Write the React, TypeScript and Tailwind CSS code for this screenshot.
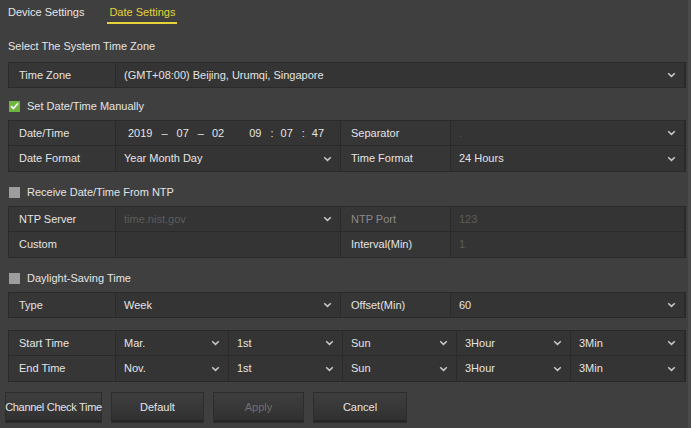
import { ReactNode } from 'react';

interface CellProps {
  children?: ReactNode;
  className?: string;
  caret?: boolean;
  dim?: boolean;
}

function Caret() {
  return (
    <svg width="9" height="6" viewBox="0 0 9 6" className="shrink-0">
      <path d="M1.2 1.2 L4.5 4.4 L7.8 1.2" fill="none" stroke="#c8c8c8" strokeWidth="1.5" />
    </svg>
  );
}

function Label({ children, className = '' }: CellProps) {
  return (
    <div className={`h-full flex items-center pl-[10px] bg-[#363636] border-r border-[#2a2a2a] ${className}`}>
      {children}
    </div>
  );
}

function Value({ children, className = '', caret, dim }: CellProps) {
  return (
    <div
      className={`h-full flex items-center justify-between pl-[8px] pr-[8px] bg-[#343434] border-r border-[#2a2a2a] ${
        dim ? 'text-[#5c5c5c]' : 'text-[#e4e4e4]'
      } ${className}`}
    >
      <span className="whitespace-nowrap">{children}</span>
      {caret && <Caret />}
    </div>
  );
}

function Row({ children, last, h = 'h-[25px]' }: { children: ReactNode; last?: boolean; h?: string }) {
  return <div className={`${h} flex ${last ? '' : 'border-b border-[#2a2a2a]'}`}>{children}</div>;
}

function Table({ children, className = '' }: { children: ReactNode; className?: string }) {
  return (
    <div className={`border border-[#2a2a2a] shadow-[inset_0_1px_0_#3a3a3a] ${className}`}>{children}</div>
  );
}

function CheckLabel({ checked, children }: { checked?: boolean; children: ReactNode }) {
  return (
    <div className="h-[20px] flex items-center gap-[7px] pl-[1px]">
      {checked ? (
        <div className="w-[11px] h-[11px] bg-[#6fb43f] flex items-center justify-center">
          <svg width="9" height="8" viewBox="0 0 9 8">
            <path d="M1 4.2 L3.4 6.5 L8 1.2" fill="none" stroke="#ffffff" strokeWidth="1.6" />
          </svg>
        </div>
      ) : (
        <div className="w-[11px] h-[11px] bg-[#9d9d9d]" />
      )}
      <span>{children}</span>
    </div>
  );
}

function Btn({ children, w, disabled }: { children: ReactNode; w: string; disabled?: boolean }) {
  return (
    <div
      className={`${w} h-[31px] flex items-center justify-center whitespace-nowrap border border-[#2c2c2c] bg-gradient-to-b from-[#3e3e3e] to-[#303030] shadow-[inset_0_-2px_0_#262626] ${
        disabled ? 'text-[#707070]' : 'text-[#e4e4e4]'
      }`}
    >
      {children}
    </div>
  );
}

export default function App() {
  return (
    <div
      className="w-[691px] h-[428px] bg-[#3f3f3f] text-[#e4e4e4] text-[11px] overflow-hidden border-r-[3px] border-[#4a4a4a]"
      style={{ fontFamily: '"Liberation Sans", Arial, sans-serif' }}
    >
      {/* Tabs */}
      <div className="h-[36px] flex items-start pt-[5px] pl-[8px]">
        <div className="h-[15px] flex items-center">Device Settings</div>
        <div className="ml-[23px] flex flex-col items-center">
          <div className="h-[15px] flex items-center text-[#e6d33a]">Date Settings</div>
          <div className="mt-[2px] h-[2px] w-[70px] bg-[#e6d33a]" />
        </div>
      </div>

      <div className="pl-[8px] pr-[2px]">
        <div className="h-[20px] flex items-center">Select The System Time Zone</div>

        <Table className="mt-[6px]">
          <Row last h="h-[24px]">
            <Label className="w-[107px]">Time Zone</Label>
            <Value className="flex-1" caret>
              (GMT+08:00) Beijing, Urumqi, Singapore
            </Value>
          </Row>
        </Table>

        <div className="mt-[8px]">
          <CheckLabel checked>Set Date/Time Manually</CheckLabel>
        </div>

        <Table className="mt-[4px]">
          <Row>
            <Label className="w-[107px]">Date/Time</Label>
            <Value className="w-[225px]">
              <span className="inline-flex">
                <span className="ml-[4px]">2019</span>
                <span className="ml-[9px]">–</span>
                <span className="ml-[9px]">07</span>
                <span className="ml-[9px]">–</span>
                <span className="ml-[8px]">02</span>
                <span className="ml-[25px]">09</span>
                <span className="ml-[9px]">:</span>
                <span className="ml-[7px]">07</span>
                <span className="ml-[9px]">:</span>
                <span className="ml-[7px]">47</span>
              </span>
            </Value>
            <Label className="w-[110px]">Separator</Label>
            <Value className="flex-1" caret dim>
              .
            </Value>
          </Row>
          <Row last>
            <Label className="w-[107px]">Date Format</Label>
            <Value className="w-[225px]" caret>
              Year Month Day
            </Value>
            <Label className="w-[110px]">Time Format</Label>
            <Value className="flex-1" caret>
              24 Hours
            </Value>
          </Row>
        </Table>

        <div className="mt-[10px]">
          <CheckLabel>Receive Date/Time From NTP</CheckLabel>
        </div>

        <Table className="mt-[4px]">
          <Row>
            <Label className="w-[107px]">NTP Server</Label>
            <Value className="w-[225px]" caret dim>
              time.nist.gov
            </Value>
            <Label className="w-[110px] text-[#8a8a8a]">NTP Port</Label>
            <Value className="flex-1" dim>
              123
            </Value>
          </Row>
          <Row last>
            <Label className="w-[107px]">Custom</Label>
            <Value className="w-[225px]" dim />
            <Label className="w-[110px]">Interval(Min)</Label>
            <Value className="flex-1" dim>
              1
            </Value>
          </Row>
        </Table>

        <div className="mt-[10px]">
          <CheckLabel>Daylight-Saving Time</CheckLabel>
        </div>

        <Table className="mt-[4px]">
          <Row last h="h-[24px]">
            <Label className="w-[107px]">Type</Label>
            <Value className="w-[225px]" caret>
              Week
            </Value>
            <Label className="w-[110px]">Offset(Min)</Label>
            <Value className="flex-1" caret>
              60
            </Value>
          </Row>
        </Table>

        <Table className="mt-[12px]">
          <Row>
            <Label className="w-[107px]">Start Time</Label>
            <Value className="w-[113px]" caret>Mar.</Value>
            <Value className="w-[114px]" caret>1st</Value>
            <Value className="w-[114px]" caret>Sun</Value>
            <Value className="w-[114px]" caret>3Hour</Value>
            <Value className="flex-1" caret>3Min</Value>
          </Row>
          <Row last>
            <Label className="w-[107px]">End Time</Label>
            <Value className="w-[113px]" caret>Nov.</Value>
            <Value className="w-[114px]" caret>1st</Value>
            <Value className="w-[114px]" caret>Sun</Value>
            <Value className="w-[114px]" caret>3Hour</Value>
            <Value className="flex-1" caret>3Min</Value>
          </Row>
        </Table>
      </div>

      <div className="mt-[10px] pl-[5px] flex gap-[9px]">
        <Btn w="w-[97px]">
          <span className="tracking-[-0.3px]">Channel Check Time</span>
        </Btn>
        <Btn w="w-[93px]">Default</Btn>
        <Btn w="w-[91px]" disabled>
          Apply
        </Btn>
        <Btn w="w-[94px]">Cancel</Btn>
      </div>
    </div>
  );
}
